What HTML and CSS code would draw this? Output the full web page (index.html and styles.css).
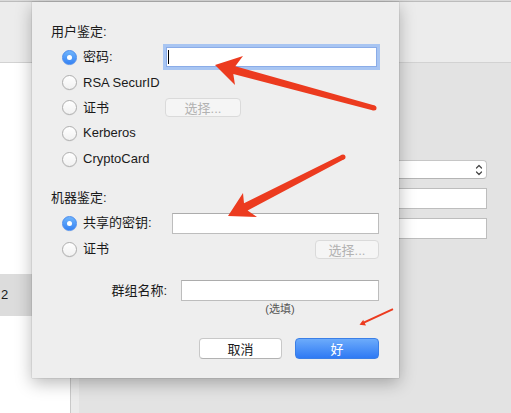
FILE: index.html
```html
<!DOCTYPE html>
<html lang="zh-CN">
<head>
<meta charset="utf-8">
<title>鉴定</title>
<link rel="stylesheet" href="styles.css">
</head>
<body>
<div class="window">
  <div class="toolbar"></div>
  <div class="content">
    <div class="sidebar">
      <div class="side-item">2</div>
    </div>
    <div class="divider"></div>
    <div class="strip"></div>
    <div class="main">
      <div class="popup">
        <svg class="chev" width="8" height="14" viewBox="0 0 8 14"><path d="M1.5 5 L4 2.5 L6.5 5 M1.5 9 L4 11.5 L6.5 9" fill="none" stroke="#444" stroke-width="1.2" stroke-linecap="round" stroke-linejoin="round"/></svg>
      </div>
      <div class="mfield"></div>
      <div class="mfield"></div>
    </div>
  </div>
</div>

<div class="sheet">
  <div class="heading">用户鉴定:</div>
  <div class="opts user">
    <div class="opt"><span class="radio on"></span>密码:</div>
    <div class="ctrl"><div class="field focus"><span class="caret"></span></div></div>
    <div class="opt"><span class="radio"></span>RSA SecurID</div>
    <div class="ctrl"></div>
    <div class="opt"><span class="radio"></span>证书</div>
    <div class="ctrl"><div class="choose">选择...</div></div>
    <div class="opt"><span class="radio"></span>Kerberos</div>
    <div class="ctrl"></div>
    <div class="opt"><span class="radio"></span>CryptoCard</div>
    <div class="ctrl"></div>
  </div>

  <div class="heading second">机器鉴定:</div>
  <div class="opts machine">
    <div class="opt"><span class="radio on"></span>共享的密钥:</div>
    <div class="ctrl"><div class="field"></div></div>
    <div class="opt"><span class="radio"></span>证书</div>
    <div class="ctrl end"><div class="choose small">选择...</div></div>
  </div>

  <div class="group">
    <div class="group-label">群组名称:</div>
    <div class="field grow"></div>
  </div>
  <div class="hint">(选填)</div>

  <div class="actions">
    <div class="btn cancel">取消</div>
    <div class="btn ok">好</div>
  </div>
</div>

<svg class="annot" width="511" height="413" viewBox="0 0 511 413">
  <g fill="#ec3b1f">
    <polygon points="215,65 243,56 235.3,66.3 374.7,105.6 373.3,110.4 233.3,74.1 235,85"/>
    <circle cx="374" cy="108" r="2.5"/>
    <polygon points="228,216 243,193 244,203.3 341.9,154.8 344.1,159.2 247.6,210.5 257,217"/>
    <circle cx="343" cy="157" r="2.5"/>
    <polygon points="359.5,324.8 363.3,319.8 363.8,321.5 392.6,308.3 393.4,309.9 364.8,323.2 366,325.4"/>
  </g>
</svg>
</body>
</html>
```

FILE: styles.css
```css
* { box-sizing: border-box; }
html, body { margin: 0; padding: 0; }
body {
  width: 511px;
  height: 413px;
  overflow: hidden;
  position: relative;
  background: #e3e3e3;
  font-family: "Liberation Sans", "Noto Sans CJK SC", sans-serif;
  font-size: 13px;
  color: #1a1a1a;
}

/* background window */
.window { display: flex; flex-direction: column; height: 413px; }
.toolbar {
  flex: none;
  height: 63px;
  background: #ececec;
  border-top: 1px solid #dadada;
  border-bottom: 1px solid #d2d2d2;
  box-shadow: inset 0 1px 0 #bcbcbc;
}
.content { flex: 1; display: flex; }
.sidebar { width: 70px; background: #fff; padding-top: 211px; }
.side-item { height: 42px; line-height: 42px; padding-left: 1px; background: #dcdcdc; }
.divider { width: 1px; background: #c9c9c9; }
.strip { width: 8px; background: #ebebeb; }
.main {
  flex: 1;
  display: flex;
  flex-direction: column;
  align-items: flex-end;
  gap: 9px;
  padding: 97px 24px 0 0;
}
.popup {
  width: 240px;
  height: 19px;
  background: #fff;
  border: 1px solid #c6c6c6;
  border-bottom-color: #b4b4b4;
  border-radius: 4px;
  display: flex;
  align-items: center;
  justify-content: flex-end;
  padding-right: 3px;
}
.mfield { width: 240px; height: 21px; background: #fff; border: 1px solid #bdbdbd; }

/* sheet dialog */
.sheet {
  position: absolute;
  left: 32px;
  top: 2px;
  width: 367px;
  height: 376px;
  background: #eeeeee;
  padding: 21px 20px 0 19px;
  display: flex;
  flex-direction: column;
  box-shadow: 0 5px 16px rgba(0, 0, 0, 0.28), 0 0 1px rgba(0, 0, 0, 0.35);
}
.heading { height: 18px; line-height: 18px; }
.heading.second { margin-top: 17px; }
.opts { display: grid; margin: 3px 0 0 11px; }
.opts.user { grid-template-columns: 101px 216px; grid-template-rows: 26px 25px 25px 26px 26px; }
.opts.machine { grid-template-columns: 110px 207px; grid-template-rows: 26px 26px; }
.opt { display: flex; align-items: center; gap: 6px; white-space: nowrap; line-height: 18px; }
.ctrl { display: flex; align-items: center; }
.ctrl.end { justify-content: flex-end; }

.radio {
  flex: none;
  width: 15px;
  height: 15px;
  border-radius: 50%;
  border: 1px solid #aeaeae;
  background: linear-gradient(#ffffff, #f1f1f1);
  box-shadow: 0 0.5px 0.5px rgba(0, 0, 0, 0.08);
  display: flex;
  align-items: center;
  justify-content: center;
}
.radio.on { border-color: #4a8cef; background: linear-gradient(#6fb4fb, #3683f4); }
.radio.on::after { content: ""; width: 5px; height: 5px; border-radius: 50%; background: #fff; }

.field {
  height: 21px;
  width: 100%;
  background: #fff;
  border: 1px solid #bdbdbd;
  border-top-color: #acacac;
}
.field.focus {
  height: 20px;
  margin: 0 2px 0 3px;
  border-color: #8aace8;
  box-shadow: 0 0 0 3px #a8c5f2;
  display: flex;
  align-items: center;
}
.caret { width: 1px; height: 14px; background: #000; margin-left: 1px; }
.field.grow { flex: 1; width: auto; }

.choose {
  width: 76px;
  height: 19px;
  margin-left: 2px;
  border: 1px solid #dadada;
  border-radius: 4px;
  background: #f5f5f5;
  color: #b2b2b2;
  display: flex;
  align-items: center;
  justify-content: center;
}
.choose.small { width: 64px; margin-left: 0; }

.group { display: flex; align-items: center; gap: 14px; height: 21px; margin-top: 18px; }
.group-label { width: 116px; text-align: right; line-height: 18px; }
.hint {
  margin: 1px 0 0 130px;
  width: 198px;
  text-align: center;
  font-size: 11px;
  line-height: 14px;
  color: #555;
}

.actions { display: flex; justify-content: flex-end; gap: 13px; margin-top: 22px; }
.btn {
  height: 21px;
  border-radius: 4px;
  display: flex;
  align-items: center;
  justify-content: center;
}
.btn.cancel { width: 83px; background: #fff; border: 1px solid #c8c8c8; border-bottom-color: #b2b2b2; }
.btn.ok { width: 84px; color: #fff; background: linear-gradient(#6cabfb, #2f7af4); border: 1px solid #3b7fe6; }

/* annotation arrows */
.annot { position: absolute; left: 0; top: 0; pointer-events: none; }
```
